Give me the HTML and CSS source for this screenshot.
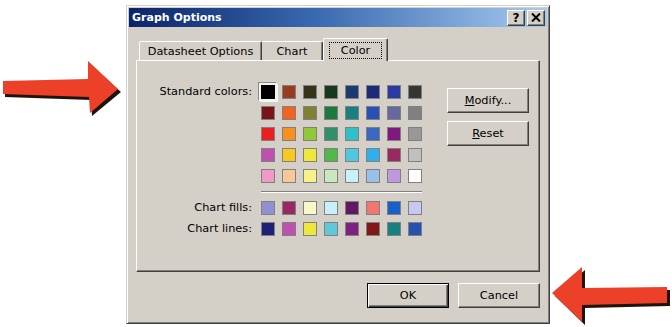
FILE: index.html
```html
<!DOCTYPE html>
<html>
<head>
<meta charset="utf-8">
<link rel="stylesheet" href="styles.css">
</head>
<body>
<div class="stage">
  <div class="dialog">
    <div class="titlebar">
      <span class="title">Graph Options</span>
      <div class="tb-buttons">
        <span class="tb-btn help">?</span>
        <span class="tb-btn close"><svg width="10" height="9" viewBox="0 0 10 9"><path d="M1 0.5 L9 8.5 M9 0.5 L1 8.5" stroke="#000" stroke-width="2"/></svg></span>
      </div>
    </div>
    <div class="content">
      <div class="tabs">
        <div class="tab t1">Datasheet Options</div>
        <div class="tab t2">Chart</div>
        <div class="tab t3 active"><span class="focus">Color</span></div>
      </div>
      <div class="panel">
        <div class="colors">
          <div class="label std">Standard colors:</div>
          <div class="grid">
            <span class="sw selected" style="background:#000000"></span>
            <span class="sw" style="background:#9a3a1e"></span>
            <span class="sw" style="background:#35331a"></span>
            <span class="sw" style="background:#173a1e"></span>
            <span class="sw" style="background:#1a3a70"></span>
            <span class="sw" style="background:#1e2a7a"></span>
            <span class="sw" style="background:#2a3aa0"></span>
            <span class="sw" style="background:#353535"></span>

            <span class="sw" style="background:#7a1418"></span>
            <span class="sw" style="background:#f06420"></span>
            <span class="sw" style="background:#808033"></span>
            <span class="sw" style="background:#1a7a40"></span>
            <span class="sw" style="background:#188080"></span>
            <span class="sw" style="background:#2850b8"></span>
            <span class="sw" style="background:#6868a0"></span>
            <span class="sw" style="background:#808080"></span>

            <span class="sw" style="background:#e82020"></span>
            <span class="sw" style="background:#f89020"></span>
            <span class="sw" style="background:#90c838"></span>
            <span class="sw" style="background:#30906a"></span>
            <span class="sw" style="background:#30c0c8"></span>
            <span class="sw" style="background:#3868c0"></span>
            <span class="sw" style="background:#801880"></span>
            <span class="sw" style="background:#989898"></span>

            <span class="sw" style="background:#c050b0"></span>
            <span class="sw" style="background:#f8c820"></span>
            <span class="sw" style="background:#f0e838"></span>
            <span class="sw" style="background:#50b848"></span>
            <span class="sw" style="background:#50c8e0"></span>
            <span class="sw" style="background:#30b0e8"></span>
            <span class="sw" style="background:#982860"></span>
            <span class="sw" style="background:#c0c0c0"></span>

            <span class="sw" style="background:#f098c8"></span>
            <span class="sw" style="background:#f8c898"></span>
            <span class="sw" style="background:#f8f088"></span>
            <span class="sw" style="background:#c8e8c0"></span>
            <span class="sw" style="background:#c8f0f8"></span>
            <span class="sw" style="background:#98c0e8"></span>
            <span class="sw" style="background:#c098e0"></span>
            <span class="sw" style="background:#ffffff"></span>
          </div>
          <div class="sep"></div>
          <div class="label">Chart fills:</div>
          <div class="grid row fills">
            <span class="sw" style="background:#9090d0"></span>
            <span class="sw" style="background:#982860"></span>
            <span class="sw" style="background:#f8f8c8"></span>
            <span class="sw" style="background:#c8f0f8"></span>
            <span class="sw" style="background:#601860"></span>
            <span class="sw" style="background:#f07870"></span>
            <span class="sw" style="background:#1860c8"></span>
            <span class="sw" style="background:#c8c8f0"></span>
          </div>
          <div class="label lines-label">Chart lines:</div>
          <div class="grid row lines">
            <span class="sw" style="background:#202078"></span>
            <span class="sw" style="background:#c050b0"></span>
            <span class="sw" style="background:#f0e838"></span>
            <span class="sw" style="background:#60c8d8"></span>
            <span class="sw" style="background:#802080"></span>
            <span class="sw" style="background:#801818"></span>
            <span class="sw" style="background:#188080"></span>
            <span class="sw" style="background:#2850b0"></span>
          </div>
        </div>
        <div class="side">
          <button class="btn"><u>M</u>odify...</button>
          <button class="btn"><u>R</u>eset</button>
        </div>
      </div>
      <div class="footer">
        <button class="btn default">OK</button>
        <button class="btn">Cancel</button>
      </div>
    </div>
  </div>

  <svg class="arrow arrow-left" width="125" height="65" viewBox="0 0 125 65">
    <polygon points="5,29 90,27 90,9 121,37 92,61 91,45 5,42" fill="#1e140e"/>
    <polygon points="3,26 88,24 88,6 118,34 90,58 89,42 3,39" fill="#ec4029"/>
  </svg>
  <svg class="arrow arrow-right" width="124" height="65" viewBox="0 0 124 65">
    <polygon points="7,34 37,8 37,29 122,28 122,44 37,46 37,63" fill="#1e140e"/>
    <polygon points="4,31 34,5 34,26 119,25 119,41 34,43 34,60" fill="#ec4029"/>
  </svg>
</div>
</body>
</html>
```

FILE: styles.css
```css
* { box-sizing: border-box; }

html, body {
  margin: 0;
  padding: 0;
  background: #ffffff;
}

.stage {
  position: relative;
  width: 672px;
  height: 327px;
  overflow: hidden;
  background: #ffffff;
  font-family: "DejaVu Sans", "Liberation Sans", sans-serif;
  font-size: 11.3px;
  color: #000;
  padding-top: 5px;
}

.dialog {
  margin-left: 126px;
  width: 424px;
  height: 319px;
  background: #d4d0c8;
  border: 1px solid;
  border-color: #d4d0c8 #404040 #404040 #d4d0c8;
  box-shadow: inset 1px 1px #ffffff, inset -1px -1px #808080;
  padding: 2px;
  display: flex;
  flex-direction: column;
}

.titlebar {
  height: 19px;
  background: linear-gradient(to right, #0a246a 0%, #3a6ab0 45%, #a6caf0 100%);
  display: flex;
  align-items: center;
  justify-content: space-between;
  padding: 0 2px 0 3px;
}

.title {
  color: #ffffff;
  font-weight: bold;
  font-size: 11px;
}

.tb-buttons {
  display: flex;
  gap: 2px;
}

.tb-btn {
  width: 18px;
  height: 16px;
  background: #d4d0c8;
  border: 1px solid;
  border-color: #ffffff #404040 #404040 #ffffff;
  box-shadow: inset -1px -1px #808080;
  display: flex;
  align-items: center;
  justify-content: center;
  font-weight: bold;
  font-size: 12px;
  line-height: 1;
}

.content {
  flex: 1;
  padding: 11px 7px 0 7px;
  display: flex;
  flex-direction: column;
}

.tabs {
  display: flex;
  align-items: flex-end;
  padding-left: 3px;
  height: 22px;
  position: relative;
  z-index: 1;
}

.tab {
  height: 19px;
  display: flex;
  align-items: center;
  justify-content: center;
  background: #d4d0c8;
  border-top: 1px solid #ffffff;
  border-left: 1px solid #ffffff;
  border-right: 1px solid #404040;
  box-shadow: inset -1px 0 #808080;
  border-radius: 2px 2px 0 0;
  padding-top: 1px;
}

.t1 { width: 123px; }
.t2 { width: 61px; border-left: none; }
.t3 { width: 65px; }

.tab.active {
  height: 23px;
  margin-bottom: -1px;
  padding-bottom: 1px;
}

.focus {
  border: 1px dotted #000;
  padding: 1px 11px;
  line-height: 13px;
}

.panel {
  height: 212px;
  border: 1px solid;
  border-color: #ffffff #404040 #404040 #ffffff;
  box-shadow: inset -1px -1px #808080;
  display: flex;
  align-items: flex-start;
  padding-top: 24px;
}

.colors {
  display: grid;
  grid-template-columns: 115px 161px;
  column-gap: 9px;
}

.label {
  text-align: right;
  line-height: 14px;
  white-space: nowrap;
  align-self: center;
}

.label.std {
  align-self: start;
}

.grid {
  display: grid;
  grid-template-columns: repeat(8, 14px);
  grid-auto-rows: 14px;
  column-gap: 7px;
  row-gap: 7px;
}

.sw {
  width: 14px;
  height: 14px;
  border: 1px solid #808080;
  display: block;
}

.sw.selected {
  border-color: #000;
  box-shadow: 0 0 0 2px #f4f4f4, -1px -1px 0 2px #8a8a8a, 1px 1px 0 2px #f4f4f4;
}

.sep {
  grid-column: 2;
  height: 2px;
  border-top: 1px solid #808080;
  border-bottom: 1px solid #ffffff;
  margin: 8px 0 8px 0;
}

.lines-label,
.grid.lines {
  margin-top: 7px;
}

.side {
  margin-left: 25px;
  padding-top: 3px;
  display: flex;
  flex-direction: column;
  gap: 8px;
}

.btn {
  width: 82px;
  height: 25px;
  background: #d4d0c8;
  border: 1px solid;
  border-color: #ffffff #404040 #404040 #ffffff;
  box-shadow: inset -1px -1px #808080;
  font-family: "DejaVu Sans", "Liberation Sans", sans-serif;
  font-size: 11.3px;
  color: #000;
  padding: 0;
  margin: 0;
}

.btn u {
  text-decoration: underline;
  text-underline-offset: 1px;
}

.btn.default {
  border-color: #000;
  box-shadow: inset 1px 1px #ffffff, inset -1px -1px #404040, inset -2px -2px #808080;
}

.footer {
  display: flex;
  justify-content: flex-end;
  gap: 9px;
  margin-top: 11px;
}

.arrow {
  position: absolute;
}

.arrow-left {
  left: 0;
  top: 55px;
}

.arrow-right {
  left: 548px;
  top: 262px;
}
```
